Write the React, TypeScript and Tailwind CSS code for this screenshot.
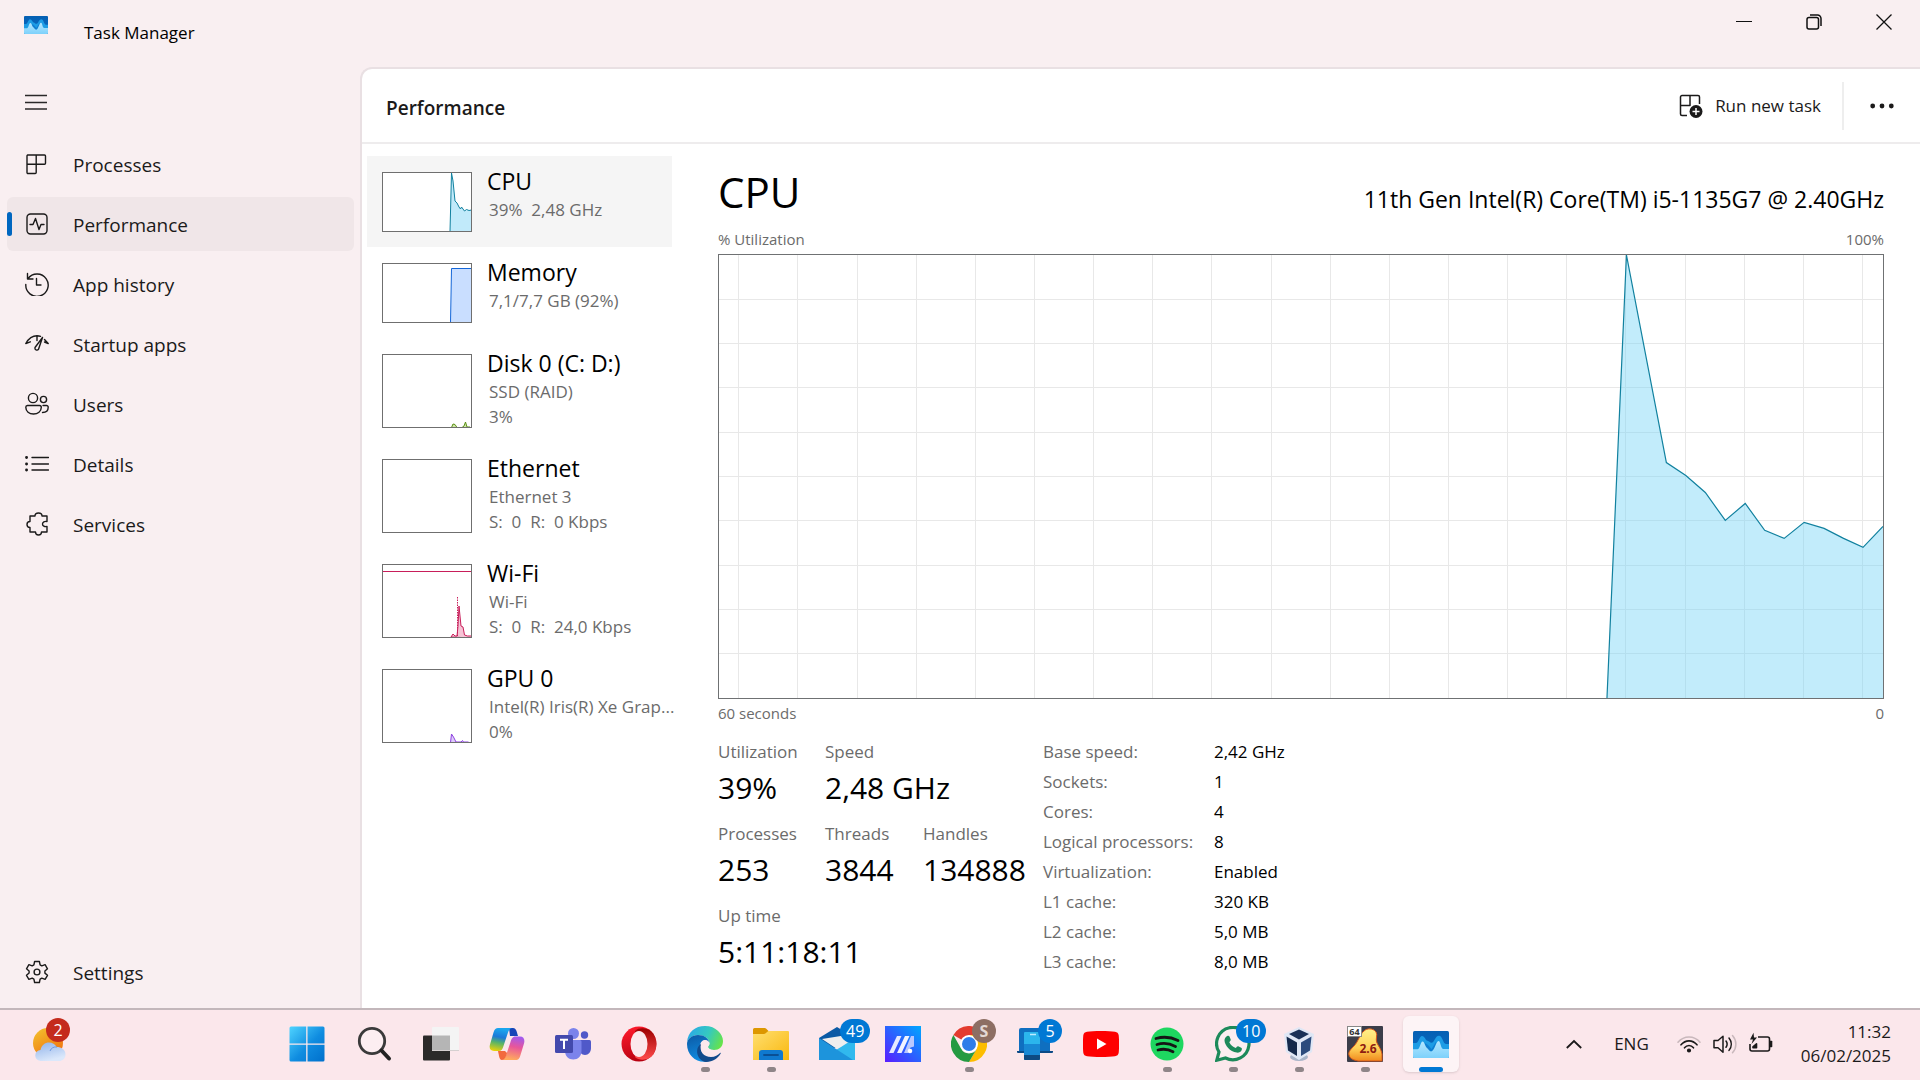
import type { ReactNode } from "react";

type IconProps = { children: ReactNode };

function LineIcon({ children }: IconProps) {
  return (
    <svg viewBox="0 0 24 24" className="size-6 shrink-0" fill="none" stroke="#1b1a1a" strokeWidth="1.4" strokeLinejoin="round" strokeLinecap="round" aria-hidden="true">
      {children}
    </svg>
  );
}

function TaskManagerLogo({ className }: { className: string }) {
  return (
    <svg viewBox="0 0 36 27" className={className} aria-hidden="true">
      <defs>
        <linearGradient id="tm-top" x1="0" y1="0" x2="0" y2="1">
          <stop offset="0" stopColor="#0560b3" />
          <stop offset="1" stopColor="#0a6cc4" />
        </linearGradient>
        <linearGradient id="tm-low" x1="0" y1="0" x2="0" y2="1">
          <stop offset="0" stopColor="#b4e6ff" />
          <stop offset="1" stopColor="#7dd1fb" />
        </linearGradient>
      </defs>
      <rect width="36" height="27" rx="1.5" fill="url(#tm-top)" />
      <path d="M0 12h3c2.500 0 3.500-7 6-7 2.800 0 3.500 4.500 5.500 4.800 1.500.2 2.500 2 4 2C21.500 11.800 22 4.800 26 4.800c3.500 0 4 8.200 7 8.200h3v8H0z" fill="#1d9ce5" />
      <path d="M12 12l3 2 3.500 4 2-3 2.500-4 1 10H11z" fill="#0f7fd2" />
      <path d="M0 18.300h4.500C7 18 7.500 10.500 9.500 10.500c2 0 2.500 5 4.500 6.500 1.500 1 2.500 3.500 4 3.500 3.500 0 5-10.500 7.500-10.500 2.200 0 2 8 5 8H36v7.500a1.500 1.500 0 0 1-1.500 1.500h-33A1.500 1.500 0 0 1 0 25.500z" fill="url(#tm-low)" />
    </svg>
  );
}

const navItems: { label: string; icon: ReactNode }[] = [
  {
    label: "Processes",
    icon: (
      <LineIcon>
        <path d="M2.500 3h17a1 1 0 0 1 1 1v7.200a1 1 0 0 1-1 1H2M11.200 3v17.500a1 1 0 0 1-1 1H3a1 1 0 0 1-1-1V4a1 1 0 0 1 1-1" />
      </LineIcon>
    ),
  },
  {
    label: "Performance",
    icon: (
      <LineIcon>
        <rect x="2" y="2" width="20" height="20" rx="3.500" />
        <path d="M5 12.500h3l2.500-6 3.500 11 2-5h3" />
      </LineIcon>
    ),
  },
  {
    label: "App history",
    icon: (
      <LineIcon>
        <path d="M2.500 1.500v5.500H8M3 6.500A11.200 11.200 0 1 1 .8 12.500M11.500 6.500V13H16" />
      </LineIcon>
    ),
  },
  {
    label: "Startup apps",
    icon: (
      <LineIcon>
        <path d="M.8 11.500C4 6 8 3.800 12 3.800c1.500 0 2.500.2 3.500.6M.8 11.500l4.500-1.700M12 4v4.500M19.500 7.500l3.700 4-3.700-1.500" />
        <path d="M17.500 5.500 10 15.500a2 2 0 0 0 3.500 1.800z" />
      </LineIcon>
    ),
  },
  {
    label: "Users",
    icon: (
      <LineIcon>
        <circle cx="8" cy="6" r="4.600" />
        <circle cx="18.500" cy="7.500" r="3.100" />
        <path d="M2.500 13.500h12a1.800 1.800 0 0 1 1.800 1.800c0 4.200-3.500 6.700-7.800 6.700S.8 19.500.8 15.300a1.800 1.800 0 0 1 1.700-1.800zM18 13.500h3.400a1.700 1.700 0 0 1 1.800 1.800c0 3.200-2.400 5.200-5.700 5.200" />
      </LineIcon>
    ),
  },
  {
    label: "Details",
    icon: (
      <LineIcon>
        <path d="M7 5.500h16.500M7 12h16.500M7 18h16.500" />
        <path d="M1.500 5.500h.1M1.500 12h.1M1.500 18h.1" strokeWidth="2.800" />
      </LineIcon>
    ),
  },
  {
    label: "Services",
    icon: (
      <LineIcon>
        <path d="M5 4h5c0-2 1.500-3 3.500-3S17 2 17 4h5v5.500c-2.500-.5-4.500.5-4.500 2.500s2 3 4.500 2.500V20h-5.500c0 2-1 3-3 3s-3-1-3-3H5v-4.500c-2 0-3-1.200-3-3S3 9.500 5 9.500z" />
      </LineIcon>
    ),
  },
];

function NavButton({ label, icon, active }: { label: string; icon: ReactNode; active?: boolean }) {
  return (
    <button
      type="button"
      aria-current={active ? "page" : undefined}
      className={`relative flex h-[54px] w-full items-center gap-6 rounded-md pl-[18px] text-left text-[19px] text-[#1b1a1a] ${active ? "bg-[#f0e6e8]" : ""}`}
    >
      {active && <span className="absolute left-0 h-6 w-[5px] rounded-full bg-[#0067c0]" />}
      {icon}
      <span className="pt-[2px]">{label}</span>
    </button>
  );
}

const cpuLine = "889.500,444 909,0 949,208 968.500,221 988,238 1008,266 1028,249 1047.500,276 1067,284 1087,268 1107,274 1126.500,284 1146,293 1166,272";

const resources: { title: string; lines: string[]; graph: ReactNode }[] = [
  {
    title: "CPU",
    lines: ["39%  2,48 GHz"],
    graph: <path d="M68 58.500 69.500 0 71 8l2 20 2 2 2 4 1.500 2 1-2 3 4 2-1.500 2.500 1L89.500 37V58.500z" fill="#c1eafa" stroke="#11819f" />,
  },
  {
    title: "Memory",
    lines: ["7,1/7,7 GB (92%)"],
    graph: <path d="M68.500 59 69.500 4.500H91v54z" fill="#c9deff" stroke="#1466d8" />,
  },
  {
    title: "Disk 0 (C: D:)",
    lines: ["SSD (RAID)", "3%"],
    graph: <path d="M69.500 72.500 71 69l2 .5 2 3h5l2-1.500 1.500-4L85 72h3" fill="#cfe6a8" stroke="#5b9016" />,
  },
  { title: "Ethernet", lines: ["Ethernet 3", "S:  0  R:  0 Kbps"], graph: null },
  {
    title: "Wi-Fi",
    lines: ["Wi-Fi", "S:  0  R:  24,0 Kbps"],
    graph: (
      <g stroke="#c81e5a" fill="none">
        <path d="M0 6.500h90" />
        <path d="M69 72l2-3 2 2h2l1-10 1-20 2 20 2 1 1.500 8 3 1h4v2z" fill="#f6c3d5" />
        <path d="M75.500 32v40" strokeDasharray="1.500 1" />
      </g>
    ),
  },
  {
    title: "GPU 0",
    lines: ["Intel(R) Iris(R) Xe Grap...", "0%"],
    graph: <path d="M68.500 72.500 69.500 64l2 3 2.500 5h5l1.500-1.500 1 1.500h5" fill="#dfcbfa" stroke="#8c42e0" />,
  },
];

function ResourceList() {
  return (
    <ul className="w-[310px] shrink-0 pt-3 pl-[5px]">
      {resources.map((r, i) => {
        const tall = r.lines.length > 1;
        return (
          <li key={r.title}>
            <button type="button" className={`flex w-full items-start gap-[15px] pl-[15px] text-left ${i === 0 ? "bg-[#f5f5f5]" : ""} ${tall ? "h-[105px]" : "h-[91px]"}`}>
              <span className={`mt-4 w-[90px] shrink-0 border border-[#6f6f6f] bg-white ${tall ? "h-[74px]" : "h-[60px]"}`}>
                <svg viewBox={tall ? "1 0 88 72" : "1 0 88 58"} className="block size-full overflow-hidden" aria-hidden="true">
                  {r.graph}
                </svg>
              </span>
              <span className="flex flex-col whitespace-pre pt-[9px]">
                <span className="text-[23px] leading-8 text-black">{r.title}</span>
                {r.lines.map((line) => (
                  <span key={line} className="pl-[2px] text-[17px] leading-[25px] text-[#6b6b6b]">
                    {line}
                  </span>
                ))}
              </span>
            </button>
          </li>
        );
      })}
    </ul>
  );
}

const verticals = Array.from({ length: 20 }, (_, i) => 1145.5 - i * 59.25);
const horizontals = Array.from({ length: 9 }, (_, i) => (i + 1) * 44.4);

function UtilizationChart() {
  return (
    <div className="h-[445px] w-full border border-[#6f7173]">
      <svg viewBox="0 0 1166 444" preserveAspectRatio="none" className="block size-full" role="img" aria-label="CPU utilization over 60 seconds">
        <g stroke="#e8e8e8" shapeRendering="crispEdges">
          {verticals.map((x) => (
            <line key={x} x1={x} x2={x} y1="0" y2="444" vectorEffect="non-scaling-stroke" />
          ))}
          {horizontals.map((y) => (
            <line key={y} x1="0" x2="1166" y1={y} y2={y} vectorEffect="non-scaling-stroke" />
          ))}
        </g>
        <polygon points={`${cpuLine} 1166,444`} fill="#75d3f5" fillOpacity="0.44" />
        <polyline points={cpuLine} fill="none" stroke="#11819f" strokeWidth="1.200" vectorEffect="non-scaling-stroke" />
      </svg>
    </div>
  );
}

function BigStat({ label, value }: { label: string; value: string }) {
  return (
    <div className="whitespace-nowrap">
      <dt className="text-[17px] leading-[30px] text-[#6b6b6b]">{label}</dt>
      <dd className="text-[30px] leading-[42px] text-black">{value}</dd>
    </div>
  );
}

const details = [
  ["Base speed:", "2,42 GHz"],
  ["Sockets:", "1"],
  ["Cores:", "4"],
  ["Logical processors:", "8"],
  ["Virtualization:", "Enabled"],
  ["L1 cache:", "320 KB"],
  ["L2 cache:", "5,0 MB"],
  ["L3 cache:", "8,0 MB"],
];

function CpuDetails() {
  return (
    <section className="flex min-w-0 flex-1 flex-col pt-3 pr-9 pl-[46px]">
      <div className="flex h-[71px] items-center justify-between">
        <h2 className="text-[42px] leading-[60px] text-black">CPU</h2>
        <p className="pt-4 text-[23px] text-black">11th Gen Intel(R) Core(TM) i5-1135G7 @ 2.40GHz</p>
      </div>
      <div className="flex h-[27px] justify-between text-[15px] leading-6 text-[#6b6b6b]">
        <span>% Utilization</span>
        <span>100%</span>
      </div>
      <UtilizationChart />
      <div className="flex justify-between pt-[2px] text-[15px] leading-6 text-[#6b6b6b]">
        <span>60 seconds</span>
        <span>0</span>
      </div>
      <div className="flex pt-3">
        <dl className="grid w-[325px] shrink-0 grid-cols-[107px_98px_1fr] content-start gap-y-[10px]">
          <BigStat label="Utilization" value="39%" />
          <div className="col-span-2">
            <BigStat label="Speed" value="2,48 GHz" />
          </div>
          <BigStat label="Processes" value="253" />
          <BigStat label="Threads" value="3844" />
          <BigStat label="Handles" value="134888" />
          <div className="col-span-3">
            <BigStat label="Up time" value="5:11:18:11" />
          </div>
        </dl>
        <table className="text-left text-[17px] leading-[30px]">
          <tbody>
            {details.map(([k, v]) => (
              <tr key={k}>
                <th scope="row" className="w-[171px] p-0 font-normal whitespace-nowrap text-[#6b6b6b]">
                  {k}
                </th>
                <td className="p-0 whitespace-nowrap text-black">{v}</td>
              </tr>
            ))}
          </tbody>
        </table>
      </div>
    </section>
  );
}

function AppIcon({ children }: IconProps) {
  return (
    <svg viewBox="0 0 36 36" className="size-9" aria-hidden="true">
      {children}
    </svg>
  );
}

type TaskApp = { name: string; icon: ReactNode; running?: boolean; active?: boolean; badge?: string; badgeClass?: string };

const blueBadge = "bg-[#0078d4] text-white";

const apps: TaskApp[] = [
  {
    name: "Start",
    icon: (
      <AppIcon>
        <defs>
          <linearGradient id="win" x1="0" y1="0" x2="1" y2="1">
            <stop offset="0" stopColor="#4fd4ff" />
            <stop offset="0.550" stopColor="#0f8ce0" />
            <stop offset="1" stopColor="#0070cc" />
          </linearGradient>
        </defs>
        <path d="M2 .5h15.200v17H.5V2A1.500 1.500 0 0 1 2 .5zM18.500.5H34A1.500 1.500 0 0 1 35.500 2v15.500h-17zM.5 18.800h16.700v16.700H2A1.500 1.500 0 0 1 .5 34zM18.500 18.800h17V34a1.500 1.500 0 0 1-1.500 1.500H18.500z" fill="url(#win)" />
      </AppIcon>
    ),
  },
  {
    name: "Search",
    icon: (
      <AppIcon>
        <circle cx="15" cy="15" r="12.700" fill="#fff" fillOpacity="0.3" stroke="#3a3a3a" strokeWidth="2.800" />
        <path d="m24.500 24.500 7.500 8" stroke="#222" strokeWidth="4" strokeLinecap="round" />
      </AppIcon>
    ),
  },
  {
    name: "Task view",
    icon: (
      <AppIcon>
        <rect x="0" y="9.500" width="27" height="25" rx="1" fill="#2b2a29" />
        <rect x="9" y="1" width="27" height="24" rx="1" fill="#f4f4f4" />
        <path d="M9 9.500h18V25H10a1 1 0 0 1-1-1z" fill="#b5b5b5" />
        <path d="M9 24.500h27" stroke="#d5d0d0" />
      </AppIcon>
    ),
  },
  {
    name: "Copilot",
    icon: (
      <AppIcon>
        <defs>
          <linearGradient id="cp-a" x1="0.300" y1="0" x2="0.100" y2="1">
            <stop offset="0" stopColor="#1aa6ee" />
            <stop offset="0.350" stopColor="#1b78d8" />
            <stop offset="0.600" stopColor="#58b368" />
            <stop offset="1" stopColor="#f8d500" />
          </linearGradient>
          <linearGradient id="cp-b" x1="0.700" y1="0" x2="0.500" y2="1">
            <stop offset="0" stopColor="#a05af0" />
            <stop offset="0.450" stopColor="#e8569a" />
            <stop offset="1" stopColor="#ffab5c" />
          </linearGradient>
        </defs>
        <path d="M20 2h4c2 0 3 1.500 3.500 3l1.500 5h-8z" fill="#1646b8" />
        <path d="M9 2h14c-2.500.5-3.500 3-4.500 6l-4 12c-.8 3-2 5-5 5H5c-4 0-5-3-4-6.500l3.500-12C5.500 3 7 2 9 2z" fill="url(#cp-a)" />
        <path d="M27 34H13c2.500-.5 3.500-3 4.500-6l4-12c.8-3 2-5.500 5-5.500H31c4 0 5 3.500 4 7l-3.500 11.500C30.500 33 29 34 27 34z" fill="url(#cp-b)" />
        <path d="M9 25h7l2 2c-1 4-2.500 7-5 7-2 0-2.500-2-3-4z" fill="#f26a3d" />
      </AppIcon>
    ),
  },
  {
    name: "Teams",
    icon: (
      <AppIcon>
        <circle cx="29.500" cy="9" r="3.700" fill="#5059c9" />
        <path d="M24 14h10.500a1.500 1.500 0 0 1 1.500 1.500V22c0 4-2.500 7-6 7s-6-3-6-7z" fill="#5059c9" />
        <circle cx="18.500" cy="7.500" r="5.500" fill="#7b83eb" />
        <path d="M10 14h15a1.500 1.500 0 0 1 1.500 1.500V25c0 5-3.500 8.500-8.200 8.500S10 30 10 25z" fill="#7b83eb" />
        <rect x="0" y="9" width="18" height="18" rx="1.500" fill="#4349ad" />
        <path d="M5 13.800h8M9 14v9" stroke="#fff" strokeWidth="2" />
      </AppIcon>
    ),
  },
  {
    name: "Opera",
    icon: (
      <AppIcon>
        <defs>
          <linearGradient id="op" x1="0.200" y1="0" x2="0.500" y2="1">
            <stop offset="0" stopColor="#ff1b2d" />
            <stop offset="1" stopColor="#b5000f" />
          </linearGradient>
          <linearGradient id="op-in" x1="0.500" y1="0" x2="0.500" y2="1">
            <stop offset="0" stopColor="#9c0000" />
            <stop offset="1" stopColor="#ff4b4b" />
          </linearGradient>
        </defs>
        <circle cx="18" cy="18" r="17.500" fill="url(#op)" />
        <path d="M14 5c4-4 12-3 16 0 7 6 7 20 0 26-4 3-12 4-16 0z" fill="url(#op-in)" />
        <ellipse cx="18" cy="18" rx="8.500" ry="13" fill="#fbe8ec" />
      </AppIcon>
    ),
  },
  {
    name: "Microsoft Edge",
    running: true,
    icon: (
      <AppIcon>
        <defs>
          <linearGradient id="ed-a" x1="0" y1="0.300" x2="1" y2="0.600">
            <stop offset="0" stopColor="#2aa9e8" />
            <stop offset="0.550" stopColor="#35c9bf" />
            <stop offset="1" stopColor="#66e34a" />
          </linearGradient>
          <linearGradient id="ed-b" x1="0" y1="0" x2="0.300" y2="1">
            <stop offset="0" stopColor="#0c59a4" />
            <stop offset="1" stopColor="#0f8be0" />
          </linearGradient>
        </defs>
        <path d="M0 16C1 6 8 0 18 0c11 0 18 8 18 15 0 6-4 9-9 9-4 0-6-1.500-6-3 0-1 1.500-2 1.500-4C22 13 18 9 11 9 6 9 2 12 0 16z" fill="url(#ed-a)" />
        <path d="M0 18C0 13 5 9 11 9c6 0 11 3.500 11.300 8-1-2.500-3-3.500-5-3-4 1-5.500 6-3.500 11 2 6 6.500 9.500 10 9.500C12 39 0 31 0 18z" fill="url(#ed-b)" />
        <path d="M14 18c-2 8 3 13 10 13 4 0 7-2 9-4 .5-.5 1 0 .7.500C31 32 26 36 19 36c-9-1-12-14-5-18z" fill="#114a8b" />
        <path d="M18 14.300c2.500 0 4.500 1.500 4.500 3.500 0 1.700-1.500 2-1.500 3.200 0 1.500 2 3 6 3l-3 2c-5 1-10-3-10-7 0-2.700 1.800-4.700 4-4.700z" fill="#fbe9ed" />
      </AppIcon>
    ),
  },
  {
    name: "File Explorer",
    running: true,
    icon: (
      <AppIcon>
        <defs>
          <linearGradient id="fx" x1="0" y1="0" x2="1" y2="1">
            <stop offset="0" stopColor="#ffdf70" />
            <stop offset="1" stopColor="#f9b80f" />
          </linearGradient>
        </defs>
        <path d="M0 3.500A1.500 1.500 0 0 1 1.500 2h10c1 0 1.500.5 2.500 1.500L15.500 5v5H0z" fill="#dd9700" />
        <path d="M0 8h11c2 0 3-3 5-3h19a1 1 0 0 1 1 1v28H0z" fill="url(#fx)" />
        <path d="M6 34V27a3 3 0 0 1 3-3h18a3 3 0 0 1 3 3v7z" fill="#0f79cf" />
        <path d="M11 29h14" stroke="#0a4f94" strokeWidth="1.800" strokeLinecap="round" />
      </AppIcon>
    ),
  },
  {
    name: "Mail",
    badge: "49",
    badgeClass: blueBadge,
    icon: (
      <AppIcon>
        <path d="M0 12 18 1l18 11v10H0z" fill="#0b5aa5" />
        <path d="m3 13 25-4 8 3-15 13z" fill="#eeeeee" />
        <path d="M36 12v22H0l22-13z" fill="#31b9ee" />
        <path d="M0 12 34 34H0z" fill="#1d94dc" />
      </AppIcon>
    ),
  },
  {
    name: "MyASUS",
    icon: (
      <AppIcon>
        <defs>
          <linearGradient id="asus" x1="0" y1="1" x2="1" y2="0">
            <stop offset="0" stopColor="#5a1cff" />
            <stop offset="0.500" stopColor="#2a62ff" />
            <stop offset="1" stopColor="#00a8ff" />
          </linearGradient>
        </defs>
        <rect width="36" height="36" fill="url(#asus)" />
        <path d="M4 27 12 10h4.500L8.500 27z" fill="#e6e9ff" />
        <path d="M12 27l8-17h4.500l-8 17z" fill="#f2f4ff" />
        <path d="m19 27 7-17h3v10.500l-3.500 1-2.500 5.500z" fill="#b9c8ff" />
        <circle cx="25" cy="25" r="2.300" fill="#fff" />
      </AppIcon>
    ),
  },
  {
    name: "Google Chrome",
    running: true,
    badge: "S",
    badgeClass: "bg-[#8d6e63] text-[#e3d8d4] font-bold",
    icon: (
      <AppIcon>
        <path d="M18 18 2.400 9A18 18 0 0 1 33.600 9z" fill="#e33b2e" />
        <path d="M18 9h15.600A18 18 0 0 1 18 36l8-13.500z" fill="#fdbd00" />
        <path d="M2.400 9 10 22.500A9 9 0 0 0 26 22.500L18 36A18 18 0 0 1 2.400 9z" fill="#249a41" />
        <circle cx="18" cy="18" r="9" fill="#fff" />
        <circle cx="18" cy="18" r="7" fill="#2f7de9" />
      </AppIcon>
    ),
  },
  {
    name: "Phone Link",
    badge: "5",
    badgeClass: blueBadge,
    icon: (
      <AppIcon>
        <path d="M2 4a2 2 0 0 1 2-2h29v23H2z" fill="#0f6fc0" />
        <path d="M0 25h36v1a1 1 0 0 1-1 1H1a1 1 0 0 1-1-1z" fill="#0b4a86" />
        <rect x="7" y="6" width="16" height="28" rx="1" fill="#2bb5ec" />
        <path d="M7 18h16v11H7z" fill="#1888d4" />
        <path d="M7 29h16v4a1 1 0 0 1-1 1H8a1 1 0 0 1-1-1z" fill="#0e4a82" />
        <path d="M13 8.500h6" stroke="#bfeaff" strokeWidth="1.500" />
      </AppIcon>
    ),
  },
  {
    name: "YouTube",
    icon: (
      <AppIcon>
        <path d="M18 5c6 0 11 .3 14 .7 2 .3 3.500 1.500 3.700 3.500.5 5 .5 12.600 0 17.600-.2 2-1.700 3.200-3.700 3.500-6 .9-22 .9-28 0-2-.3-3.500-1.500-3.700-3.500-.5-5-.5-12.600 0-17.600C.5 7.200 2 6 4 5.700 7 5.300 12 5 18 5z" fill="#fe0000" />
        <path d="m14 12.500 9.500 5.500-9.500 5.500z" fill="#fff" />
      </AppIcon>
    ),
  },
  {
    name: "Spotify",
    running: true,
    icon: (
      <AppIcon>
        <circle cx="18" cy="18" r="16.500" fill="#1ed760" />
        <path d="M7 12.500c7-2 15-1.500 22 2M8 18.500c6-1.800 13-1 18.500 2M9 24c5-1.300 10.500-.8 15 1.800" stroke="#151515" strokeWidth="2.800" strokeLinecap="round" fill="none" />
      </AppIcon>
    ),
  },
  {
    name: "WhatsApp",
    running: true,
    badge: "10",
    badgeClass: blueBadge,
    icon: (
      <AppIcon>
        <path d="M1.800 34.200 4 26A16.200 16.200 0 1 1 10.500 32z" fill="#fbeef0" stroke="#1c8a5a" strokeWidth="3.200" strokeLinejoin="miter" />
        <path d="M12.200 10c1-.5 2-.3 2.400.8l1.100 2.700c.3.800-.7 1.900-1.400 2.700 1.400 2.700 3.500 4.600 6.500 5.800.8-.9 1.500-2 2.400-1.700l3 1.400c.9.500.8 1 .5 2.200-.7 2-3 3-5 2.700C15 25.600 9.800 19.500 9.500 14.500c0-2 1.300-3.900 2.700-4.500z" fill="#1c8a5a" />
      </AppIcon>
    ),
  },
  {
    name: "VirtualBox",
    running: true,
    icon: (
      <AppIcon>
        <ellipse cx="18" cy="31" rx="9" ry="4" fill="#a9b4c8" />
        <path d="m18 1 15 7-2 18-13 8L5 26 3 8z" fill="#dfe7f5" />
        <path d="M18 3.500 28 8l-10 5.500L8 8z" fill="#1a3157" />
        <path d="m5.500 10.500 10.500 6V30l-9-5.500z" fill="#14294b" />
        <path d="m30.500 10.500-10.500 6V30l9-5.500z" fill="#2c4b7c" />
      </AppIcon>
    ),
  },
  {
    name: "Fractal viewer",
    running: true,
    icon: (
      <AppIcon>
        <defs>
          <linearGradient id="blob" x1="0.500" y1="0" x2="0.500" y2="1">
            <stop offset="0" stopColor="#fff08a" />
            <stop offset="0.600" stopColor="#ffd257" />
            <stop offset="1" stopColor="#f08a1d" />
          </linearGradient>
        </defs>
        <rect width="36" height="36" rx="1" fill="#3b3d49" />
        <path d="M17 5c3-3 9-3 12 1 2 3-1 7 1 11s4 6 5 11v7H11c-4-1-8-2-9-6-1-3 2-6 5-9 4-4 6-12 10-15z" fill="url(#blob)" stroke="#d9571c" />
        <rect x="0.500" y="0.500" width="14" height="10" fill="#fff" stroke="#888" />
        <text x="7.500" y="9" textAnchor="middle" fontSize="9" fontWeight="700" fill="#333">64</text>
        <text x="21" y="27" textAnchor="middle" fontSize="12" fontWeight="700" fill="#8e1b10">2.6</text>
      </AppIcon>
    ),
  },
  { name: "Task Manager", running: true, active: true, icon: <TaskManagerLogo className="h-[27px] w-9" /> },
];

function TaskbarButton({ app }: { app: TaskApp }) {
  return (
    <button type="button" aria-label={app.name} className="flex h-full w-[66px] items-center justify-center first:mr-[2px]">
      <span className={`relative flex size-14 items-center justify-center rounded-md ${app.active ? "bg-[#fdf4f6] shadow-sm" : ""}`}>
        {app.icon}
        {app.badge && (
          <span className={`absolute top-[3px] left-[31px] flex h-6 min-w-6 items-center justify-center rounded-full px-[6px] text-base leading-6 ${app.badgeClass}`}>
            {app.badge}
          </span>
        )}
        {app.running && <span className={`absolute bottom-0 h-[5px] rounded-full ${app.active ? "w-6 bg-[#0078d4]" : "w-[9px] bg-[#8f8588]"}`} />}
      </span>
    </button>
  );
}

function Taskbar() {
  return (
    <footer className="flex h-[72px] shrink-0 items-center border-t-2 border-[#c3b7bb] bg-[#fbe7eb] pb-[2px]">
      <div className="flex w-[274px] shrink-0 pl-8">
        <button type="button" aria-label="Weather" className="relative size-9">
          <AppIcon>
            <defs>
              <linearGradient id="sun" x1="0" y1="0" x2="0.600" y2="1">
                <stop offset="0" stopColor="#f3c52f" />
                <stop offset="1" stopColor="#f0720f" />
              </linearGradient>
              <linearGradient id="cloud" x1="0" y1="0" x2="0.400" y2="1">
                <stop offset="0" stopColor="#8fb2ea" />
                <stop offset="1" stopColor="#dbe8fb" />
              </linearGradient>
            </defs>
            <circle cx="16" cy="17" r="15" fill="url(#sun)" />
            <path d="M9 35a5.500 5.500 0 0 1-.5-11C9.500 19 13 16.500 17 16.500c3.500 0 6 1.700 7.500 4.500 5 0 9 2.500 9 7.500 0 4-3 6.500-6.500 6.500z" fill="url(#cloud)" />
            <path d="M18 25c1-3 4-4.500 7-4" stroke="#6f98df" fill="none" />
          </AppIcon>
          <span className="absolute -top-2 left-[14px] flex size-6 items-center justify-center rounded-full bg-[#c42b1c] text-base text-white">2</span>
        </button>
      </div>
      <nav aria-label="Taskbar" className="flex h-full">
        {apps.map((app) => (
          <TaskbarButton key={app.name} app={app} />
        ))}
      </nav>
      <div className="ml-auto flex items-center pr-[29px] text-[17px] text-[#1b1a1a]">
        <button type="button" aria-label="Show hidden icons" className="mr-8">
          <svg viewBox="0 0 16 10" className="h-[10px] w-4" fill="none" stroke="#1b1a1a" strokeWidth="1.800" aria-hidden="true">
            <path d="m.8 9 7.200-7 7.200 7" />
          </svg>
        </button>
        <button type="button" className="mr-7">ENG</button>
        <button type="button" aria-label="Network, volume and battery" className="mr-7 flex gap-3">
          <svg viewBox="0 0 24 24" className="size-6" fill="none" stroke="#1b1a1a" strokeWidth="1.600" strokeLinecap="round" aria-hidden="true">
            <path d="M1 10.200c6-7 16-7 22 0" stroke="#c9b8bc" />
            <path d="M4 12.800c4.500-5.300 11.500-5.300 16 0M7.500 15.800c2.500-3 6.500-3 9 0" />
            <circle cx="12" cy="18.500" r="1.300" fill="#1b1a1a" />
          </svg>
          <svg viewBox="0 0 24 24" className="size-6" fill="none" stroke="#1b1a1a" strokeWidth="1.500" strokeLinejoin="round" strokeLinecap="round" aria-hidden="true">
            <path d="M1 8.500h4l5-4.300v16L5 15.800H1zM13 9c1.300 1.800 1.300 4.500 0 6.300M16 6c3 3.700 3 8.700 0 12.400" />
            <path d="M19.500 3.500c4.500 5 4.500 12.300 0 17.300" stroke="#c9b8bc" />
          </svg>
          <svg viewBox="0 0 24 24" className="size-6" fill="none" stroke="#1b1a1a" strokeWidth="1.600" strokeLinejoin="round" aria-hidden="true">
            <path d="M9 5h9.500a2 2 0 0 1 2 2v10a2 2 0 0 1-2 2H3a2 2 0 0 1-2-2V12" />
            <path d="M21 9.500h1.500v5H21z" fill="#1b1a1a" />
            <path d="M4 15.800h3.500v-4l-3.500 3z" fill="#1b1a1a" />
            <path d="M4.500.8 1 7.500h3L2.500 12 8 5.500H5z" fill="#1b1a1a" stroke="none" />
          </svg>
        </button>
        <button type="button" className="text-right leading-6">
          11:32
          <br />
          06/02/2025
        </button>
      </div>
    </footer>
  );
}

export default function App() {
  return (
    <div className="flex h-screen flex-col overflow-hidden bg-[#f9eff1] font-['Open_Sans','Noto_Sans',sans-serif]">
      <header className="flex h-[67px] shrink-0 items-start justify-between">
        <div className="flex pl-6">
          <TaskManagerLogo className="mt-4 h-[18px] w-6" />
          <h1 className="pt-5 pl-9 text-[17px] leading-[26px] text-black">Task Manager</h1>
        </div>
        <div className="flex pr-px">
          <button type="button" aria-label="Minimize" className="flex h-11 w-[70px] items-center justify-center">
            <svg viewBox="0 0 16 16" className="size-4" stroke="#111" aria-hidden="true">
              <path d="M0 7.500h16" />
            </svg>
          </button>
          <button type="button" aria-label="Restore" className="flex h-11 w-[70px] items-center justify-center">
            <svg viewBox="0 0 16 16" className="size-4" fill="none" stroke="#111" strokeWidth="1.500" aria-hidden="true">
              <rect x="1" y="3.500" width="11.500" height="11.500" rx="2" />
              <path d="M4 1h7.500A3.500 3.500 0 0 1 15 4.500V12" />
            </svg>
          </button>
          <button type="button" aria-label="Close" className="flex h-11 w-[70px] items-center justify-center">
            <svg viewBox="0 0 16 16" className="size-4" stroke="#111" strokeWidth="1.300" aria-hidden="true">
              <path d="m.5.5 15 15M15.500.5l-15 15" />
            </svg>
          </button>
        </div>
      </header>

      <div className="flex min-h-0 flex-1">
        <aside className="flex w-[360px] shrink-0 flex-col pr-[6px] pb-[9px] pl-[7px]">
          <button type="button" aria-label="Open navigation" className="ml-[18px] flex h-[70px] w-6 items-center">
            <svg viewBox="0 0 22 16" className="h-4 w-[22px]" stroke="#2b2829" strokeWidth="1.500" aria-hidden="true">
              <path d="M0 1.500h22M0 8.500h22M0 15h22" />
            </svg>
          </button>
          <nav aria-label="Task Manager" className="flex flex-col gap-[6px]">
            {navItems.map((item) => (
              <NavButton key={item.label} label={item.label} icon={item.icon} active={item.label === "Performance"} />
            ))}
          </nav>
          <div className="mt-auto">
            <NavButton
              label="Settings"
              icon={
                <LineIcon>
                  <path d="M9.600 1.500h4.800l.7 3.400 1.700 1 3.300-1.200 2.400 4.100-2.600 2.300v2l2.600 2.200-2.400 4.100-3.300-1.200-1.700 1-.7 3.300H9.600l-.7-3.300-1.700-1-3.300 1.200-2.400-4.100 2.600-2.300v-2L1.500 8.800l2.400-4.100 3.300 1.200 1.700-1z" />
                  <circle cx="12" cy="12" r="2.900" />
                </LineIcon>
              }
            />
          </div>
        </aside>

        <main className="flex min-w-0 flex-1 flex-col rounded-tl-xl border-t-2 border-l-2 border-[#e9e0e3] bg-white">
          <div className="flex h-[75px] shrink-0 items-center border-b-2 border-[#eeeced] pl-6">
            <h2 className="flex-1 pt-[6px] text-[19px] font-semibold text-[#1b1a1a]">Performance</h2>
            <button type="button" className="flex h-12 items-center gap-3 border-r-2 border-[#eeeeee] pr-[21px] text-[17px] text-[#1b1a1a]">
              <svg viewBox="0 0 24 24" className="size-6" fill="none" stroke="#1b1a1a" strokeWidth="1.500" strokeLinejoin="round" aria-hidden="true">
                <path d="M8 21.500H3a1.500 1.500 0 0 1-1.500-1.500V3A1.500 1.500 0 0 1 3 1.500h16A1.500 1.500 0 0 1 20.500 3v7M11 1.500V11.500H1.500M11 11.500h0" />
                <circle cx="17" cy="17.500" r="6.500" fill="#1b1a1a" stroke="none" />
                <path d="M17 14v7M13.500 17.500h7" stroke="#fff" />
              </svg>
              Run new task
            </button>
            <button type="button" aria-label="More options" className="flex h-12 w-[76px] items-center justify-center">
              <svg viewBox="0 0 24 6" className="h-[6px] w-6" fill="#1b1a1a" aria-hidden="true">
                <circle cx="2.700" cy="3" r="2.400" />
                <circle cx="12" cy="3" r="2.400" />
                <circle cx="21.300" cy="3" r="2.400" />
              </svg>
            </button>
          </div>
          <div className="flex min-h-0 flex-1">
            <ResourceList />
            <CpuDetails />
          </div>
        </main>
      </div>

      <Taskbar />
    </div>
  );
}
